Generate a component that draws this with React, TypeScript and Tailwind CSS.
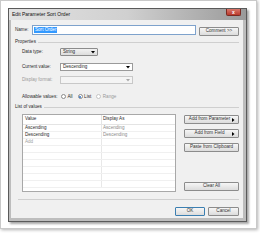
import React from "react";

const Arrow = ({ color = "#000" }: { color?: string }) => (
  <svg width="4" height="3" viewBox="0 0 4 3" className="shrink-0">
    <polygon points="0,0 4,0 2,2.5" fill={color} />
  </svg>
);

const SideArrow = () => (
  <svg width="3" height="4" viewBox="0 0 3 4" className="shrink-0">
    <polygon points="0,0 2.5,2 0,4" fill="#000" />
  </svg>
);

function Button({
  w,
  children,
  primary,
  arrow,
}: {
  w: string;
  children: React.ReactNode;
  primary?: boolean;
  arrow?: boolean;
}) {
  return (
    <div
      className={`${w} h-[9px] flex items-center rounded-[1px] border bg-gradient-to-b from-[#f6f6f6] to-[#dcdcdc] text-[#333] ${
        arrow ? "pl-[2px] pr-[3px]" : "justify-center"
      } ${primary ? "border-[#3c7fb1]" : "border-[#8c8c8c]"}`}
    >
      <span className={`leading-none ${arrow ? "flex-1 text-center" : ""}`}>{children}</span>
      {arrow && <SideArrow />}
    </div>
  );
}

function Radio({ checked, disabled, label }: { checked?: boolean; disabled?: boolean; label: string }) {
  return (
    <div className="flex items-center gap-[1.5px]">
      <span
        className={`w-[5px] h-[5px] rounded-full border flex items-center justify-center bg-white ${
          disabled ? "border-[#c4c4c4]" : "border-[#8a8a8a]"
        }`}
      >
        {checked && <span className="w-[2px] h-[2px] rounded-full bg-[#2a6fc9]" />}
      </span>
      <span className={disabled ? "text-[#9a9a9a]" : ""}>{label}</span>
    </div>
  );
}

function GroupHeader({ title }: { title: string }) {
  return (
    <div className="h-[8px] flex items-center">
      <span className="leading-none">{title}</span>
      <div className="flex-1 h-px bg-[#cfcfcf] ml-[2px]" />
    </div>
  );
}

const rows = [
  { v: "Ascending", d: "Ascending" },
  { v: "Descending", d: "Descending" },
  { v: "Add", d: "", add: true },
  { v: "", d: "" },
  { v: "", d: "" },
  { v: "", d: "" },
  { v: "", d: "" },
  { v: "", d: "" },
  { v: "", d: "" },
];

export default function App() {
  return (
    <div className="w-[260px] h-[234px] bg-white font-['Liberation_Sans',Arial,sans-serif] text-[4.6px] text-[#2a2a2a] overflow-hidden">
      <div className="w-[257px] h-[229px] border border-[#c9c9c9] bg-white shadow-[1px_1px_3px_rgba(0,0,0,0.3)] pl-[7px] pt-[7px]">
        {/* Window */}
        <div className="w-[239px] h-[214px] border border-[#5a5a5a] bg-[#bdbdbd] flex flex-col pl-[2px] pr-[3px] pb-[3px] shadow-[2px_2px_2px_rgba(0,0,0,0.35)]">
          {/* Title bar */}
          <div className="h-[11px] flex items-center bg-gradient-to-r from-[#e2e2e2] via-[#d0d0d0] to-[#9a9a9a] -ml-[2px] -mr-[3px] pl-[3px] relative">
            <span className="text-[5px] text-[#111] leading-none">Edit Parameter Sort Order</span>
            <div className="absolute right-[5px] top-0 w-[15px] h-[7px] rounded-b-[2px] bg-gradient-to-b from-[#d9776b] to-[#b9382b] border border-t-0 border-[#7a2a22] flex items-center justify-center">
              <span className="text-white text-[5px] leading-none font-bold">x</span>
            </div>
          </div>

          {/* Client area */}
          <div className="flex-1 bg-[#f0f0f0] flex flex-col px-[4px]">
            {/* Name row */}
            <div className="mt-[5px] h-[10px] flex items-center">
              <span className="w-[17px] leading-none">Name:</span>
              <div className="w-[164px] h-[10px] border border-[#7ea2cc] bg-white flex items-center pl-[1px]">
                <span className="bg-[#3399ff] text-white px-[1px] leading-[6px]">Sort Order</span>
              </div>
              <div className="ml-[3px] mt-[2px]">
                <Button w="w-[40px]">Comment &gt;&gt;</Button>
              </div>
            </div>

            <div className="mt-[3px]">
              <GroupHeader title="Properties" />
            </div>

            {/* Data type */}
            <div className="mt-[2px] h-[8px] flex items-center pl-[7px]">
              <span className="w-[38px] leading-none">Data type:</span>
              <div className="w-[38px] h-[8px] border border-[#8c8c8c] rounded-[1px] bg-gradient-to-b from-[#f2f2f2] to-[#dddddd] flex items-center justify-between px-[2px]">
                <span className="leading-none">String</span>
                <Arrow />
              </div>
            </div>

            {/* Current value */}
            <div className="mt-[7px] h-[8px] flex items-center pl-[7px]">
              <span className="w-[38px] leading-none">Current value:</span>
              <div className="w-[73px] h-[8px] border border-[#9a9a9a] bg-white flex items-center justify-between px-[2px]">
                <span className="leading-none">Descending</span>
                <Arrow />
              </div>
            </div>

            {/* Display format */}
            <div className="mt-[5px] h-[8px] flex items-center pl-[7px]">
              <span className="w-[38px] leading-none text-[#9a9a9a]">Display format:</span>
              <div className="w-[73px] h-[8px] border border-[#c8c8c8] bg-[#f4f4f4] flex items-center justify-end px-[2px]">
                <Arrow color="#a8a8a8" />
              </div>
            </div>

            {/* Allowable values */}
            <div className="mt-[9px] h-[8px] flex items-center pl-[7px]">
              <span className="w-[39px] leading-none">Allowable values:</span>
              <div className="flex items-center gap-[5px]">
                <Radio label="All" />
                <Radio label="List" checked />
                <Radio label="Range" disabled />
              </div>
            </div>

            <div className="mt-[2px]">
              <GroupHeader title="List of values" />
            </div>

            {/* Table + buttons */}
            <div className="mt-[3px] flex pl-[7px] gap-[8px]">
              <div className="w-[154px] h-[78px] border border-[#a8a8a8] bg-white flex flex-col overflow-hidden">
                <div className="h-[10px] flex items-center border-b border-[#e4e4e4] shrink-0">
                  <span className="w-[78px] pl-[2px] leading-none">Value</span>
                  <span className="flex-1 h-full border-l border-[#e4e4e4] pl-[1px] flex items-center leading-none">Display As</span>
                </div>
                {rows.map((r, i) => (
                  <div key={i} className="h-[7px] flex items-center border-b border-[#f0f0f0] shrink-0">
                    <span className={`w-[78px] pl-[2px] leading-none ${r.add ? "text-[#a0a0a0]" : ""}`}>{r.v}</span>
                    <span className="flex-1 h-full border-l border-[#e8e8e8] pl-[1px] flex items-center leading-none text-[#8a8a8a]">{r.d}</span>
                  </div>
                ))}
              </div>
              <div className="flex flex-col w-[55px]">
                <div className="mt-[1px]">
                  <Button w="w-[55px]" arrow>Add from Parameter</Button>
                </div>
                <div className="mt-[5px]">
                  <Button w="w-[55px]" arrow>Add from Field</Button>
                </div>
                <div className="mt-[5px]">
                  <Button w="w-[55px]">Paste from Clipboard</Button>
                </div>
                <div className="mt-auto mb-[1px]">
                  <Button w="w-[55px]">Clear All</Button>
                </div>
              </div>
            </div>

            {/* Separator */}
            <div className="mt-[7px] ml-[3px] h-px bg-[#cfcfcf]" />

            {/* OK / Cancel */}
            <div className="mt-[7px] flex justify-end gap-[3px]">
              <Button w="w-[30px]" primary>OK</Button>
              <Button w="w-[31px]">Cancel</Button>
            </div>
          </div>
        </div>
      </div>
    </div>
  );
}
